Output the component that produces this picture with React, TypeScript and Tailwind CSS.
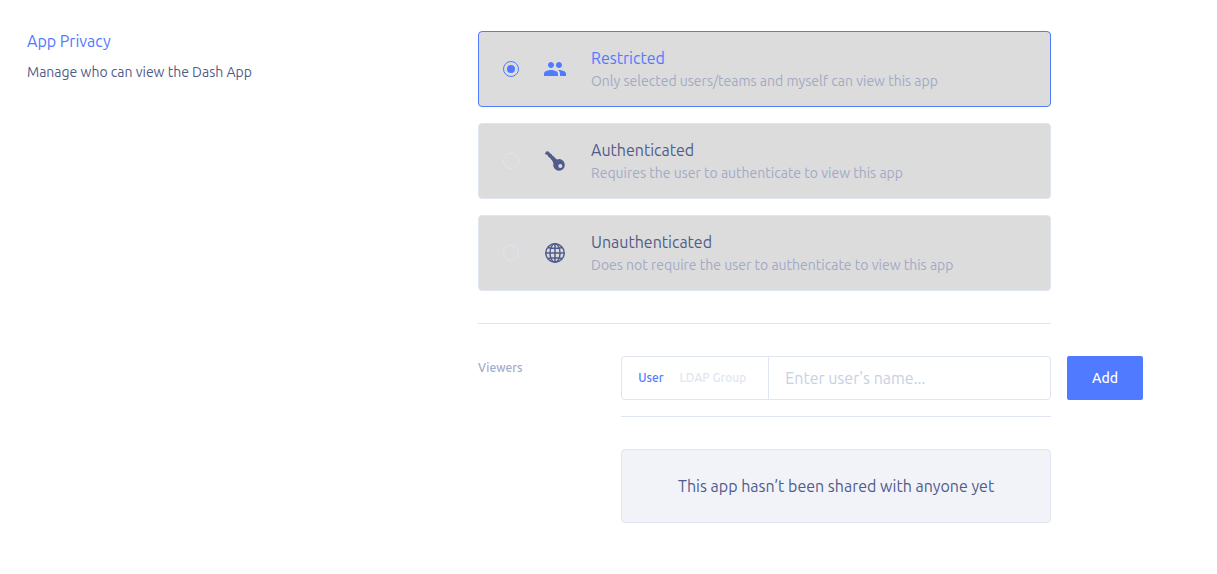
import { useState } from "react";
import type { ReactNode } from "react";

type IconProps = { className?: string };

function PeopleIcon({ className }: IconProps) {
  return (
    <svg viewBox="0 0 24 24" className={className} fill="currentColor" aria-hidden="true">
      <path d="M16 11c1.66 0 2.99-1.34 2.99-3S17.66 5 16 5s-3 1.34-3 3 1.34 3 3 3zm-8 0c1.66 0 2.99-1.34 2.99-3S9.66 5 8 5 5 6.34 5 8s1.34 3 3 3zm0 2c-2.33 0-7 1.17-7 3.5V19h14v-2.5c0-2.33-4.67-3.5-7-3.5zm8 0c-.29 0-.62.02-.97.05 1.16.84 1.97 1.97 1.97 3.45V19h6v-2.5c0-2.33-4.67-3.5-7-3.5z" />
    </svg>
  );
}

function KeyIcon({ className }: IconProps) {
  return (
    <svg viewBox="0 0 24 24" className={className} fill="currentColor" aria-hidden="true">
      <path
        fillRule="evenodd"
        d="M2 4.2 3.6 2.2 5.4 2.4 7.6 4.8 8.8 5.2 9 6.4 10.4 6.7 11 8.2 12.2 8.6 12.7 9.8 14.2 10.4A5.8 5.8 0 1 1 10.4 14.4L9.6 12.2 8.2 10.6 6.8 8.8 5 7.6 4.4 5.8 2.6 5.6ZM17.3 19.1a2 2 0 1 0 0-4 2 2 0 0 0 0 4Z"
      />
    </svg>
  );
}

function GlobeIcon({ className }: IconProps) {
  return (
    <svg
      viewBox="0 0 24 24"
      className={className}
      fill="none"
      stroke="currentColor"
      strokeWidth="1.5"
      aria-hidden="true"
    >
      <circle cx="12" cy="12" r="9.2" />
      <ellipse cx="12" cy="12" rx="5" ry="9.2" />
      <path d="M12 2.8v18.4M2.8 12h18.4M4.8 6.4c4 1 10.400 1 14.400 0M4.800 17.600c4-1 10.400-1 14.400 0" />
    </svg>
  );
}

type Option = { id: string; title: string; text: string; icon: ReactNode };

const options: Option[] = [
  {
    id: "restricted",
    title: "Restricted",
    text: "Only selected users/teams and myself can view this app",
    icon: <PeopleIcon className="size-6" />,
  },
  {
    id: "authenticated",
    title: "Authenticated",
    text: "Requires the user to authenticate to view this app",
    icon: <KeyIcon className="size-6" />,
  },
  {
    id: "unauthenticated",
    title: "Unauthenticated",
    text: "Does not require the user to authenticate to view this app",
    icon: <GlobeIcon className="size-6" />,
  },
];

function PrivacyOption({
  option,
  checked,
  onSelect,
}: {
  option: Option;
  checked: boolean;
  onSelect: () => void;
}) {
  return (
    <label
      className={`flex cursor-pointer items-center rounded border bg-[#dcdcdc] px-6 py-4 ${
        checked ? "border-[#507aff] text-[#507aff]" : "border-[#dfe5f3] text-[#505c8a]"
      }`}
    >
      <input
        type="radio"
        name="privacy"
        value={option.id}
        checked={checked}
        onChange={onSelect}
        className="grid size-4 shrink-0 appearance-none place-items-center rounded-full border border-[#dfe5f3] before:size-2 before:rounded-full checked:border-[#507aff] checked:before:bg-[#507aff]"
      />
      <span className="ml-6 shrink-0">{option.icon}</span>
      <span className="ml-6 flex min-w-0 flex-col gap-1">
        <span className="text-base leading-5">{option.title}</span>
        <span className="text-sm leading-[18px] text-[#a2aac6]">{option.text}</span>
      </span>
    </label>
  );
}

export default function App() {
  const [privacy, setPrivacy] = useState("restricted");
  const [kind, setKind] = useState("User");

  return (
    <main className="grid grid-cols-[451fr_665fr] bg-white pt-[31px] pr-[74px] pb-12 pl-[27px] font-['Ubuntu','Noto_Sans',sans-serif] text-[#505c8a]">
      <header>
        <h1 id="privacy-title" className="text-base leading-5 text-[#507aff]">
          App Privacy
        </h1>
        <p className="mt-[11px] text-sm leading-5">Manage who can view the Dash App</p>
      </header>

      <section className="grid grid-cols-[minmax(0,1fr)_minmax(0,3fr)_92px]">
        <fieldset aria-labelledby="privacy-title" className="col-span-2 flex flex-col gap-4">
          {options.map((option) => (
            <PrivacyOption
              key={option.id}
              option={option}
              checked={privacy === option.id}
              onSelect={() => setPrivacy(option.id)}
            />
          ))}
        </fieldset>

        <hr className="col-span-2 col-start-1 my-8 border-[#dfe5f3]" />

        <label
          htmlFor="viewer"
          className="col-start-1 pt-[2px] text-xs leading-5 font-medium text-[#a2aac6]"
        >
          Viewers
        </label>
        <div className="flex h-11 rounded border border-[#dfe5f3]">
          <div className="flex shrink-0 gap-4 border-r border-[#dfe5f3] pr-[22px] pl-4 text-xs font-medium">
            {["User", "LDAP Group"].map((name) => (
              <button
                key={name}
                type="button"
                aria-pressed={kind === name}
                onClick={() => setKind(name)}
                className={kind === name ? "text-[#507aff]" : "text-[#dfe5f3]"}
              >
                {name}
              </button>
            ))}
          </div>
          <input
            id="viewer"
            type="text"
            placeholder="Enter user's name..."
            className="min-w-0 flex-1 rounded-r px-4 text-base outline-none placeholder:text-[#c8d0e5]"
          />
        </div>
        <button
          type="button"
          className="ml-4 h-11 rounded-xs bg-[#507aff] text-sm font-medium text-white"
        >
          Add
        </button>

        <div className="col-start-2">
          <hr className="mt-4 mb-8 border-[#dfe5f3]" />
          <p className="rounded border border-[#dfe5f3] bg-[#f2f3f9] px-4 py-6 text-center text-base leading-6">
            This app hasn’t been shared with anyone yet
          </p>
        </div>
      </section>
    </main>
  );
}
